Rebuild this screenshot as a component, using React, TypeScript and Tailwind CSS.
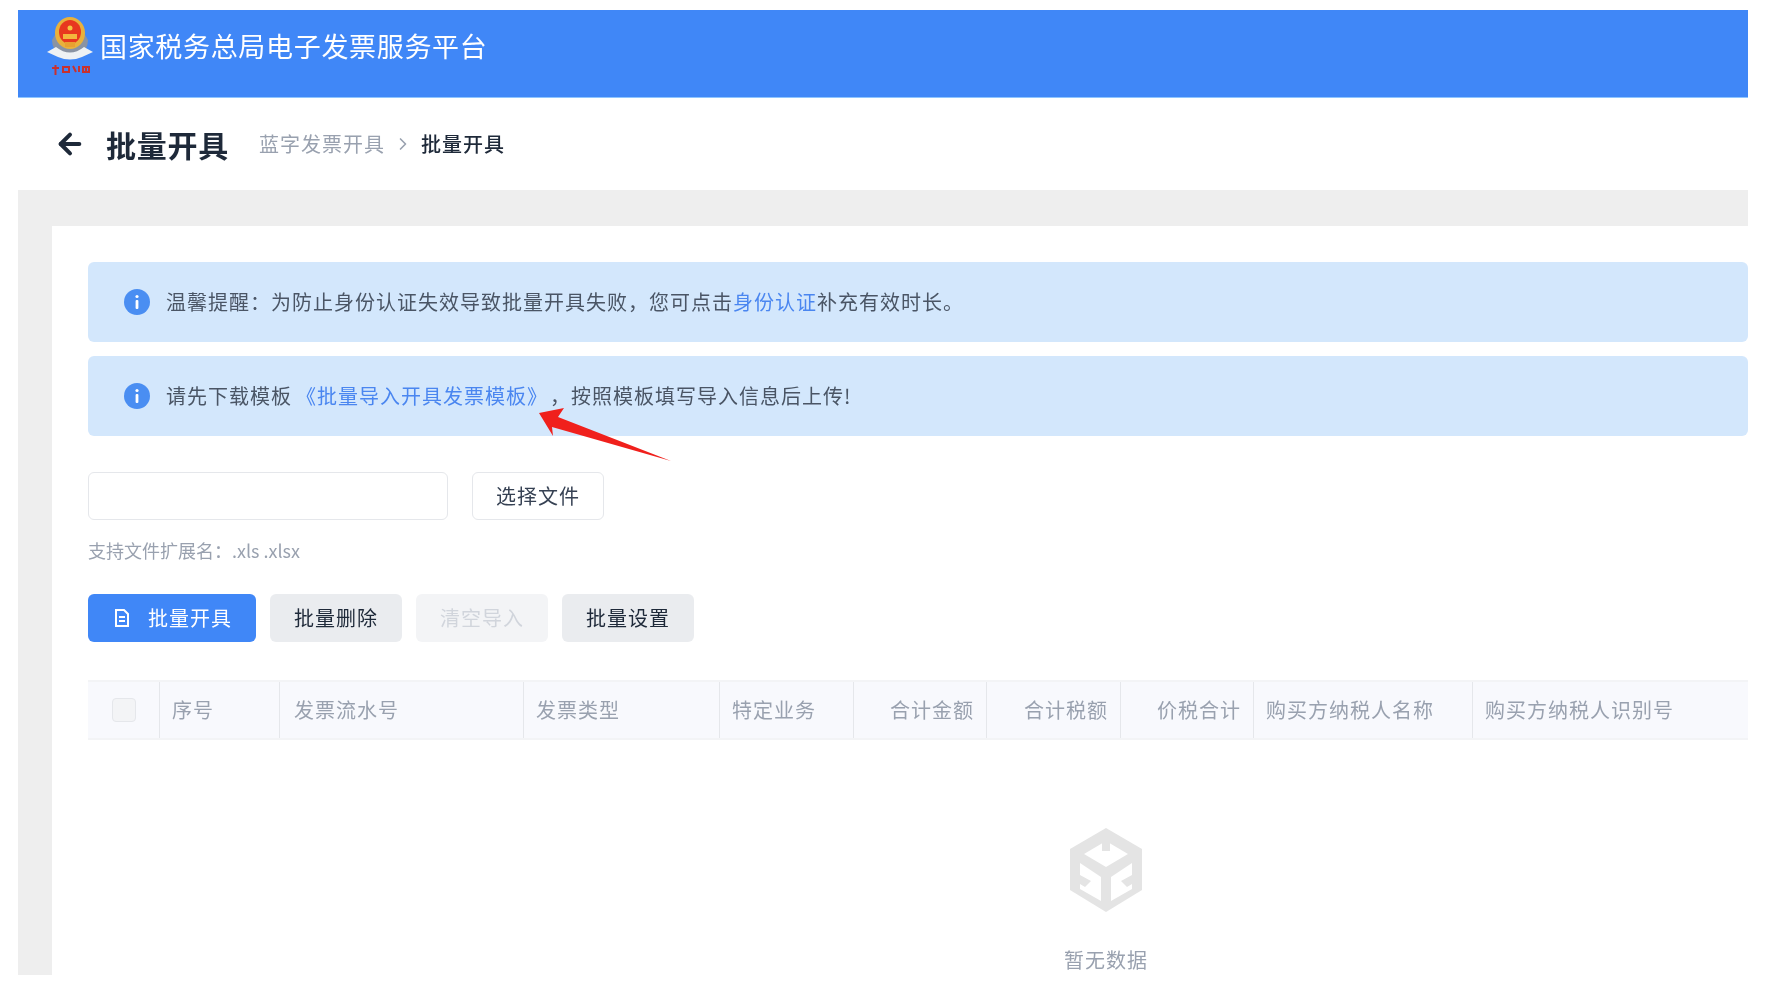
import { ArrowLeft, ChevronRight } from 'lucide-react';

const font = { fontFamily: '"Noto Sans CJK SC", "Noto Sans", sans-serif' };

const columns = [
  { label: '序号', className: 'pl-3' },
  { label: '发票流水号', className: 'pl-3.5' },
  { label: '发票类型', className: 'pl-3' },
  { label: '特定业务', className: 'pl-3' },
  { label: '合计金额', className: 'justify-end pr-3' },
  { label: '合计税额', className: 'justify-end pr-3' },
  { label: '价税合计', className: 'justify-end pr-3' },
  { label: '购买方纳税人名称', className: 'pl-3' },
  { label: '购买方纳税人识别号', className: 'pl-3' },
];

function Emblem() {
  return (
    <svg className="h-15 w-12 shrink-0" viewBox="0 0 48 60">
      {/* wreath */}
      <path d="M6 24 Q6 36 17 39 L31 39 Q42 36 42 24 L36 14 H12 Z" fill="#8a93a3" />
      {/* ring and shield */}
      <ellipse cx="24" cy="17" rx="15" ry="16" fill="#e9b13c" />
      <ellipse cx="24" cy="16" rx="11" ry="12" fill="#e8371f" />
      <circle cx="24" cy="12" r="2.5" fill="#f4c542" />
      <rect x="17" y="18" width="14" height="5" fill="#f3b53d" />
      <rect x="19" y="26" width="10" height="5" fill="#e9a030" />
      {/* ribbon */}
      <path d="M1 36 L10 31 Q24 42 38 31 L47 36 L36 41 Q24 46 12 41 Z" fill="#eef1f4" />
      {/* seal script below */}
      <g fill="none" stroke="#c8322f" strokeWidth="2">
        <path d="M6 52 H13 M9.5 49 V59" />
        <path d="M17 51 H23 V56 H17 Z" />
        <path d="M27 50 L30 56 M33 50 V56" />
        <path d="M37 51 H43 V56 H37 Z M40 51 V56" />
      </g>
    </svg>
  );
}

function InfoIcon() {
  return (
    <svg className="size-6.5 shrink-0" viewBox="0 0 26 26">
      <circle cx="13" cy="13" r="13" fill="#4a8ef2" />
      <circle cx="13" cy="7.5" r="1.6" fill="#fff" />
      <rect x="11.6" y="11" width="2.8" height="9" rx="1" fill="#fff" />
    </svg>
  );
}

function EmptyIcon() {
  return (
    <svg className="h-21 w-18" viewBox="0 0 72 84">
      <path d="M36 0 L72 21 V62 L36 84 L0 62 V21 Z" fill="#e4e4e4" />
      <path d="M36 13 L58 26 L36 39 L14 26 Z" fill="#fff" />
      <path d="M10 35 L31 49 V73 L10 61 Z" fill="#fff" />
      <path d="M62 35 L41 49 V73 L62 61 Z" fill="#fff" />
      <path d="M32 10 H40 V23 H32 Z" fill="#e4e4e4" />
      <path d="M10 47 L21 53 L15 59 L10 56 Z" fill="#e4e4e4" />
      <path d="M62 47 L51 53 L57 59 L62 56 Z" fill="#e4e4e4" />
    </svg>
  );
}

export default function App() {
  return (
    <div className="relative flex h-[975px] flex-col overflow-hidden pt-2.5 pl-4.5 pr-6.5 blur-[0.6px]" style={font}>
      {/* Header */}
      <header className="flex h-22 shrink-0 items-start gap-1.5 border-b border-blue-300 bg-[#4087f7] pl-7 pt-1.5">
        <Emblem />
        <span className="mt-3 text-[27px] leading-9 tracking-wide text-white">国家税务总局电子发票服务平台</span>
      </header>

      {/* Page title */}
      <div className="flex h-23 shrink-0 items-center pl-9">
        <ArrowLeft className="size-8 text-gray-800" strokeWidth={3} />
        <h1 className="ml-5 text-3xl font-bold tracking-wide text-gray-800">批量开具</h1>
        <span className="ml-7.5 text-xl tracking-wider text-gray-400">蓝字发票开具</span>
        <ChevronRight className="mx-2 size-5 text-gray-400" />
        <span className="text-xl font-medium tracking-wider text-gray-800">批量开具</span>
      </div>

      {/* Content */}
      <div className="flex min-h-0 flex-1 flex-col bg-[#eeeeee] pl-8.5 pt-9">
        <div className="flex-1 overflow-hidden bg-white pl-9 pt-9">
          <div className="flex flex-col gap-3.5">
            <div className="flex h-20 items-center gap-4 rounded-md bg-[#d3e7fc] pl-9 text-xl tracking-wider text-gray-600">
              <InfoIcon />
              <p>
                温馨提醒：为防止身份认证失效导致批量开具失败，您可点击<span className="text-[#4a86f0]">身份认证</span>补充有效时长。
              </p>
            </div>
            <div className="flex h-20 items-center gap-4 rounded-md bg-[#d3e7fc] pl-9 text-xl tracking-wider text-gray-600">
              <InfoIcon />
              <p>
                请先下载模板<span className="ml-1 text-[#4a86f0]">《批量导入开具发票模板》</span><span className="ml-3">，</span>按照模板填写导入信息后上传!
              </p>
            </div>
          </div>

          <div className="mt-9 flex gap-6">
            <div className="h-12 w-90 rounded-md border border-gray-200" />
            <button className="h-12 w-33 rounded-md border border-gray-200 text-xl tracking-wider text-gray-700">
              选择文件
            </button>
          </div>
          <p className="mt-4 text-lg text-gray-400">支持文件扩展名：.xls .xlsx</p>

          <div className="mt-7.5 flex gap-3.5">
            <button className="flex h-12 items-center gap-4 rounded-md bg-[#4087f7] px-6 text-xl tracking-wider text-white">
              <svg className="size-5" fill="none" stroke="currentColor" strokeWidth={2} viewBox="0 0 20 20">
                <path d="M4 2 H12 L16 6 V18 H4 Z M7 9 H13 M7 13 H13" />
              </svg>
              批量开具
            </button>
            <button className="h-12 rounded-md bg-gray-200/80 px-6 text-xl tracking-wider text-gray-800">批量删除</button>
            <button className="h-12 rounded-md bg-gray-100 px-6 text-xl tracking-wider text-gray-300">清空导入</button>
            <button className="h-12 rounded-md bg-gray-200/80 px-6 text-xl tracking-wider text-gray-800">批量设置</button>
          </div>

          {/* Table */}
          <div className="mt-9.5 grid h-15 grid-cols-[72px_120px_244px_196px_134px_133px_134px_133px_219px_1fr] border-y-2 border-gray-100 bg-[#f8f9fd]">
            <div className="flex items-center justify-center border-r border-gray-200">
              <span className="size-6 rounded border border-gray-200 bg-gray-100" />
            </div>
            {columns.map((col, i) => (
              <div
                key={col.label}
                className={`flex items-center text-xl tracking-wider text-gray-400 ${col.className} ${i < columns.length - 1 ? 'border-r border-gray-200' : ''}`}
              >
                {col.label}
              </div>
            ))}
          </div>

          {/* The table runs past the right edge of the shot, so its empty state sits off centre */}
          <div className="flex w-[2036px] flex-col items-center pt-22">
            <EmptyIcon />
            <span className="mt-8.5 text-xl tracking-wider text-gray-400">暂无数据</span>
          </div>
        </div>
      </div>

      {/* Red annotation arrow */}
      <svg className="absolute left-132 top-100 h-16 w-40" viewBox="0 0 160 64">
        <path d="M11 13 L36 8 L30 17 L143 61 L24 27 L25 36 Z" fill="#f0201c" />
      </svg>
    </div>
  );
}
